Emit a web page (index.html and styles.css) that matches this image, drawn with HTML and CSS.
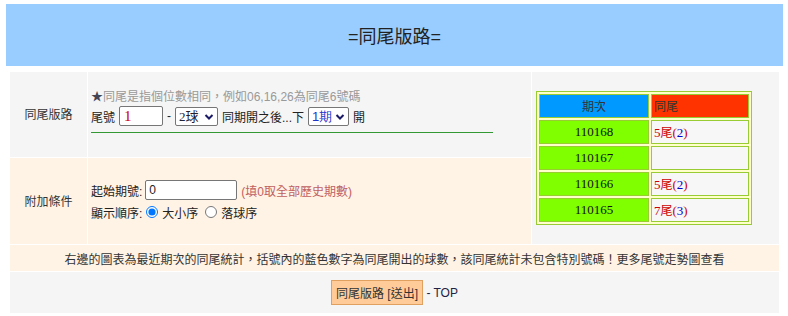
FILE: index.html
```html
<!DOCTYPE html>
<html lang="zh-Hant">
<head>
<meta charset="utf-8">
<title>同尾版路</title>
<link rel="stylesheet" href="styles.css">
</head>
<body>
<div class="page">
  <header class="banner"><h1 class="title">=同尾版路=</h1></header>
  <div class="board">
    <div class="cell label grey">同尾版路</div>
    <div class="cell main grey first">
      <p class="hint"><span class="star">★</span>同尾是指個位數相同，例如06,16,26為同尾6號碼</p>
      <div class="formline">
        <span>尾號</span>
        <input class="tail" type="text" value="1">
        <span>-</span>
        <span class="selwrap">
          <select class="sel balls"><option>2球</option></select>
          <svg class="chev" width="10" height="8" viewBox="0 0 10 8"><path d="M1.5 2 L5 5.5 L8.5 2" fill="none" stroke="#1a1a66" stroke-width="2"/></svg>
        </span>
        <span>同期開之後...下</span>
        <span class="selwrap">
          <select class="sel periods"><option>1期</option></select>
          <svg class="chev" width="10" height="8" viewBox="0 0 10 8"><path d="M1.5 2 L5 5.5 L8.5 2" fill="none" stroke="#1a1a66" stroke-width="2"/></svg>
        </span>
        <span>開</span>
      </div>
      <div class="rule"></div>
    </div>
    <div class="cell side grey">
      <table class="stats">
        <tr><th class="h-period">期次</th><th class="h-tail">同尾</th></tr>
        <tr><td class="period">110168</td><td class="tailv"><span class="r">5<span class="cjk">尾</span>(</span><span class="b">2</span><span class="r">)</span></td></tr>
        <tr><td class="period">110167</td><td class="tailv"></td></tr>
        <tr><td class="period">110166</td><td class="tailv"><span class="r">5<span class="cjk">尾</span>(</span><span class="b">2</span><span class="r">)</span></td></tr>
        <tr><td class="period">110165</td><td class="tailv"><span class="r">7<span class="cjk">尾</span>(</span><span class="b">3</span><span class="r">)</span></td></tr>
      </table>
    </div>
    <div class="cell label peach">附加條件</div>
    <div class="cell main peach second">
      <div class="optline">
        <span>起始期號:</span>
        <input class="start" type="text" value="0">
        <span class="note">(填0取全部歷史期數)</span>
      </div>
      <div class="optline">
        <span>顯示順序:</span>
        <label class="opt"><input type="radio" name="ord" checked>大小序</label>
        <label class="opt"><input type="radio" name="ord">落球序</label>
      </div>
    </div>
    <div class="cell notice peach">右邊的圖表為最近期次的同尾統計，括號內的藍色數字為同尾開出的球數，該同尾統計未包含特別號碼！更多尾號走勢圖查看</div>
    <div class="cell footer grey">
      <button class="submit" type="button">同尾版路 [送出]</button>
      <span class="top">&nbsp;- TOP</span>
    </div>
  </div>
</div>
</body>
</html>
```
FILE: styles.css
```css
html, body {
  margin: 0;
  padding: 0;
  background: #fff;
}
body {
  font-family: "Liberation Sans", "Noto Sans CJK TC", sans-serif;
  font-size: 12px;
  color: #222;
}
.page {
  padding: 4px 5px 0 6px;
  width: 777px;
}
.banner {
  background: #99ccff;
  height: 62px;
  display: flex;
  align-items: center;
  justify-content: center;
}
.title {
  margin: 0;
  font-size: 18px;
  font-weight: normal;
  color: #222;
  line-height: 24px;
  padding-top: 4px;
}
.board {
  margin: 6px 4px 0 4px;
  display: grid;
  grid-template-columns: 77px 443px 247px;
  grid-template-rows: 85px 86px 26px 41px;
  gap: 1px;
  background: #fff;
}
.cell {
  box-sizing: border-box;
}
.grey { background: #f5f5f5; }
.peach { background: #fff3e6; }
.label {
  display: flex;
  align-items: center;
  justify-content: center;
  color: #333;
  padding-bottom: 2px;
}
.main {
  padding-left: 3px;
}
.first { padding-top: 17px; }
.second { padding-top: 21px; }
.hint {
  margin: 0;
  line-height: 16px;
  color: #999;
}
.star { color: #445; }
.formline, .optline {
  display: flex;
  align-items: center;
  gap: 4px;
  height: 22px;
}
.tail {
  box-sizing: border-box;
  width: 44px;
  height: 20px;
  border: 1px solid #767676;
  border-radius: 2px;
  padding: 0 4px;
  font-family: "Liberation Serif", serif;
  font-size: 15px;
  color: #cc0000;
  background: #fff;
}
.selwrap {
  position: relative;
  display: inline-flex;
}
.sel {
  -webkit-appearance: none;
  appearance: none;
  box-sizing: border-box;
  height: 19px;
  border: 1px solid #767676;
  border-radius: 2px;
  padding: 0 0 0 3px;
  font-size: 12px;
  background: #fff;
  margin: 0;
}
.chev {
  position: absolute;
  right: 4px;
  top: 6px;
  pointer-events: none;
}
.balls { width: 43px; color: #223; font-family: "Liberation Serif", "Noto Sans CJK TC", serif; font-size: 13px; }
.periods { width: 41px; color: #2233cc; font-size: 13px; }
.rule {
  margin-top: 5px;
  width: 402px;
  border-top: 1px solid #339933;
}
.start {
  box-sizing: border-box;
  width: 92px;
  height: 20px;
  border: 1px solid #767676;
  border-radius: 2px;
  padding: 0 3px;
  font-size: 12px;
  background: #fff;
  color: #222;
  margin-left: -1px;
}
.note { color: #c06060; }
.opt {
  display: inline-flex;
  align-items: center;
}
.opt input {
  margin: 0 4px 0 0;
  width: 12px;
  height: 12px;
}
.opt + .opt { margin-left: 3px; }
.side {
  grid-row: 1 / 3;
  grid-column: 3;
  display: flex;
  align-items: center;
  padding-left: 4px;
}
.stats {
  border: 1px solid #99cc33;
  border-spacing: 2px;
  background: #ffffcc;
  width: 216px;
  font-family: "Liberation Serif", "Noto Sans CJK TC", serif;
  font-size: 13px;
}
.stats th, .stats td {
  border: 1px solid #99cc33;
  height: 22px;
  padding: 0 2px;
  font-weight: normal;
}
.h-period {
  width: 104px;
  background: #0099ff;
  color: #333;
  text-align: center;
  font-size: 12px;
}
.h-tail {
  background: #ff3300;
  color: #333;
  text-align: left;
  font-size: 12px;
}
.period {
  background: #7fff00;
  color: #111;
  text-align: center;
}
.tailv {
  background: #f7f7f7;
  text-align: left;
}
.cjk { font-size: 12px; }
.r { color: #cc0000; }
.b { color: #0000cc; }
.notice {
  grid-column: 1 / 4;
  display: flex;
  align-items: center;
  justify-content: center;
  color: #333;
}
.footer {
  grid-column: 1 / 4;
  display: flex;
  align-items: center;
  justify-content: center;
}
.submit {
  height: 25px;
  padding: 0 4px;
  background: #ffcc99;
  border: 1px solid #e0a060;
  border-radius: 0;
  font-family: "Liberation Sans", "Noto Sans CJK TC", sans-serif;
  font-size: 12px;
  color: #333;
}
.top {
  color: #222244;
  font-size: 12px;
}
```
